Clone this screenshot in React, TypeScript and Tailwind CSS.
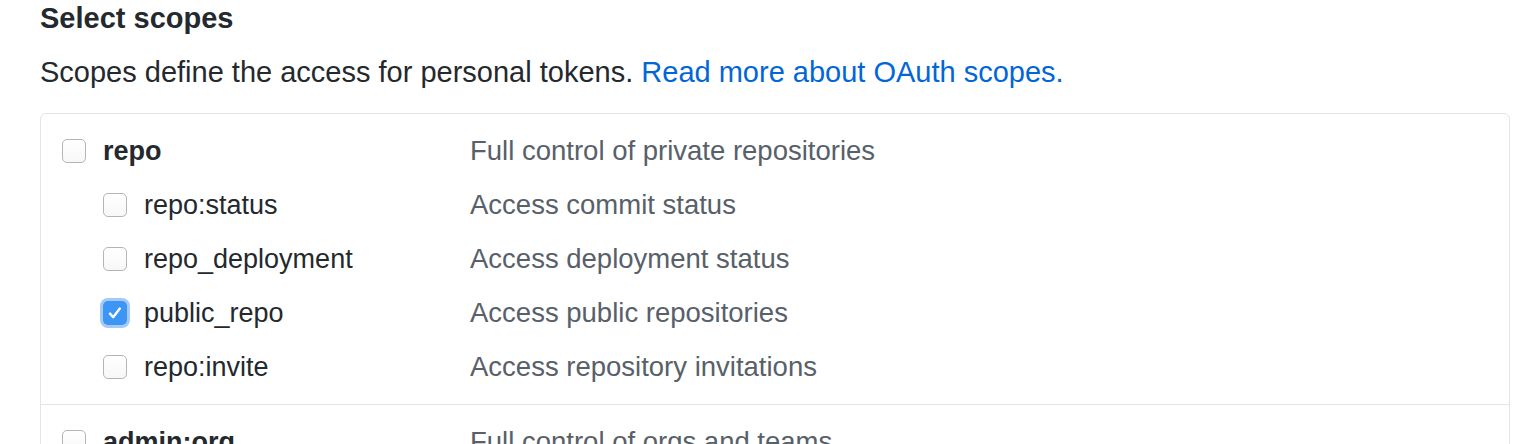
import { useState } from 'react';

type Scope = {
  name: string;
  description: string;
  children?: Scope[];
};

const scopes: Scope[] = [
  {
    name: 'repo',
    description: 'Full control of private repositories',
    children: [
      { name: 'repo:status', description: 'Access commit status' },
      { name: 'repo_deployment', description: 'Access deployment status' },
      { name: 'public_repo', description: 'Access public repositories' },
      { name: 'repo:invite', description: 'Access repository invitations' },
    ],
  },
  {
    name: 'admin:org',
    description: 'Full control of orgs and teams',
    children: [
      { name: 'write:org', description: 'Read and write org and team membership' },
      { name: 'read:org', description: 'Read org and team membership' },
    ],
  },
];

function Checkbox({ checked, onChange }: { checked: boolean; onChange: () => void }) {
  return (
    <button
      type="button"
      onClick={onChange}
      className={`flex h-[24px] w-[24px] shrink-0 items-center justify-center rounded-[5px] ${
        checked
          ? 'bg-[#3d96f5] shadow-[0_0_0_3px_#a4cbf7]'
          : 'border border-[#b5b5b5] bg-gradient-to-b from-white to-[#f7f7f7]'
      }`}
    >
      {checked && (
        <svg width="18" height="18" viewBox="0 0 18 18" fill="none">
          <path
            d="M4 9.6l3.2 3.6L13.8 4.6"
            stroke="white"
            strokeWidth="2.4"
            strokeLinecap="round"
            strokeLinejoin="round"
          />
        </svg>
      )}
    </button>
  );
}

export default function App() {
  const [checked, setChecked] = useState<Record<string, boolean>>({ public_repo: true });

  const toggle = (name: string) => setChecked((c) => ({ ...c, [name]: !c[name] }));

  return (
    <div
      className="bg-white pl-[40px] pr-[6px] leading-[36px] text-[#24292e]"
      style={{ fontFamily: '"Liberation Sans", Arial, Helvetica, sans-serif' }}
    >
      <h3 className="text-[29px] font-bold">Select scopes</h3>
      <p className="mt-[18px] text-[29px]">
        Scopes define the access for personal tokens.{' '}
        <a href="#" className="text-[#0366d6]">
          Read more about OAuth scopes.
        </a>
      </p>

      <div className="mt-[23px] rounded-[6px] border border-[#e1e4e8]">
        {scopes.map((scope, i) => (
          <div
            key={scope.name}
            className={`flex flex-col gap-[18px] py-[19px] pl-[21px] ${i > 0 ? 'border-t border-[#e1e4e8]' : ''}`}
          >
            {/* Parent scope */}
            <div className="flex items-center">
              <div className="flex w-[408px] items-center gap-[17px]">
                <Checkbox checked={!!checked[scope.name]} onChange={() => toggle(scope.name)} />
                <span className="text-[27px] font-bold">{scope.name}</span>
              </div>
              <span className="text-[27.5px] text-[#586069]">{scope.description}</span>
            </div>

            {/* Child scopes */}
            {scope.children?.map((child) => (
              <div key={child.name} className="flex items-center">
                <div className="flex w-[408px] items-center gap-[17px] pl-[41px]">
                  <Checkbox checked={!!checked[child.name]} onChange={() => toggle(child.name)} />
                  <span className="text-[27px]">{child.name}</span>
                </div>
                <span className="text-[27.5px] text-[#586069]">{child.description}</span>
              </div>
            ))}
          </div>
        ))}
      </div>
    </div>
  );
}
